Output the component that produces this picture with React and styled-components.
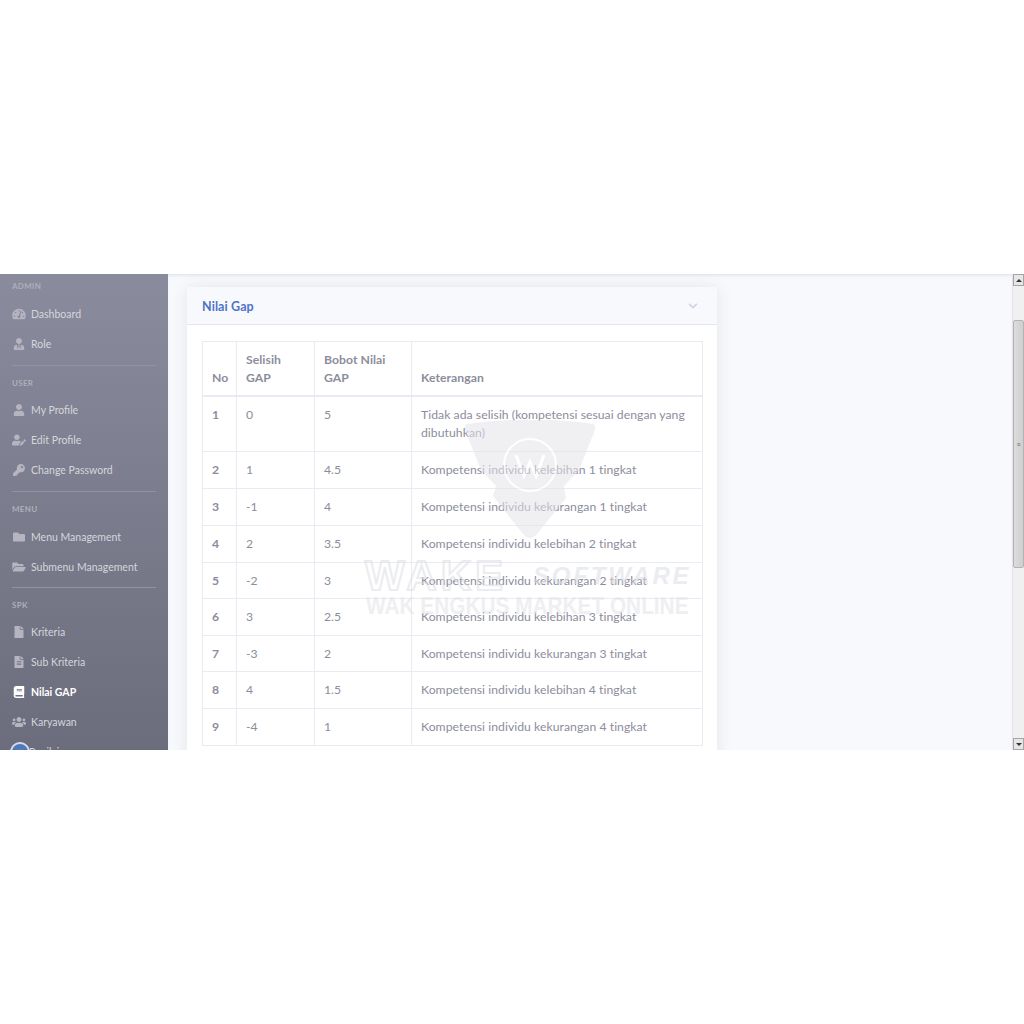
import React from 'react';
import styled, {createGlobalStyle} from 'styled-components';
import {
  FaTachometerAlt,
  FaUserTie,
  FaUser,
  FaUserEdit,
  FaKey,
  FaFolder,
  FaFolderOpen,
  FaFile,
  FaFileAlt,
  FaBook,
  FaUsers,
  FaChevronDown
} from 'react-icons/fa';

const GlobalStyle = createGlobalStyle`
  html, body {
    margin: 0;
    background: #fff;
    font-family: Lato, "Open Sans", sans-serif;
  }
`;

const Page = styled.div`
  width: 1024px;
  height: 1024px;
  padding-top: 274px;
  box-sizing: border-box;
  background: #fff;
  overflow: hidden;
`;

const Frame = styled.div`
  position: relative;
  display: flex;
  height: 476px;
  overflow: hidden;
  background: #f8f9fc;
`;

const Sidebar = styled.nav`
  width: 168px;
  flex-shrink: 0;
  padding: 0 12px;
  box-sizing: border-box;
  overflow: hidden;
  background: linear-gradient(180deg, #8a8b9c 0%, #6b6c7c 100%);
`;

const Heading = styled.div`
  height: ${p => (p.$tall ? 25 : 24)}px;
  line-height: 24px;
  font-size: 8px;
  font-weight: 700;
  letter-spacing: 0.3px;
  color: #aeafbb;
  text-transform: uppercase;
`;

const Item = styled.div`
  display: flex;
  align-items: center;
  height: 30px;
  font-size: 10.5px;
  font-weight: ${p => (p.$active ? 700 : 400)};
  color: ${p => (p.$active ? '#ffffff' : '#d6d6dd')};
  white-space: nowrap;

  svg {
    width: 14px;
    margin-right: 5px;
    flex-shrink: 0;
    font-size: 12px;
    color: ${p => (p.$active ? '#ffffff' : '#b4b5c0')};
  }
`;

const Label = styled.span`
  display: block;
`;

const Divider = styled.div`
  height: 1px;
  margin: ${p => (p.$tight ? 5 : 6)}px 0 5px;
  background: #9192a2;
`;

const Avatar = styled.span`
  width: 20px;
  height: 20px;
  margin: 0 -1px 0 -2px;
  border-radius: 50%;
  box-sizing: border-box;
  border: 2px solid #d5dbe8;
  background: #4f79b8;
  flex-shrink: 0;
`;

const Content = styled.main`
  flex: 1;
  min-width: 0;
  padding: 13px 0 0 19px;
  overflow: hidden;
  box-shadow: inset 0 3px 4px -3px rgba(90, 92, 105, 0.25);
`;

const Card = styled.section`
  width: 530px;
  background: #fff;
  border-radius: 3px;
  box-shadow: 0 0 16px rgba(58, 59, 69, 0.1);
`;

const CardHeader = styled.header`
  display: flex;
  align-items: center;
  justify-content: space-between;
  height: 38px;
  box-sizing: border-box;
  padding: 1px 19px 0 15px;
  background: #f8f9fc;
  border-bottom: 1px solid #e3e6f0;
  border-radius: 3px 3px 0 0;

  svg {
    font-size: 10px;
    color: #d1d3e2;
  }
`;

const CardTitle = styled.h6`
  margin: 0;
  font-size: 12.5px;
  font-weight: 700;
  letter-spacing: 0.1px;
  color: #4e73c9;
`;

const CardBody = styled.div`
  padding: 16px 15px 60px;
`;

const Table = styled.table`
  width: 500px;
  table-layout: fixed;
  border-collapse: collapse;
  font-size: 12.2px;
  line-height: 18px;
  letter-spacing: 0.05px;
  color: #8c8d9c;
`;

const Th = styled.th`
  width: ${p => p.$w}px;
  padding: 9px 9px 8px;
  box-sizing: border-box;
  text-align: left;
  vertical-align: bottom;
  font-weight: 700;
  border: 1px solid #e9ebf3;
  border-bottom-width: 2px;
`;

const Td = styled.td`
  height: ${p => p.$h || 36}px;
  padding: 9px 9px 7px;
  box-sizing: border-box;
  vertical-align: top;
  font-weight: ${p => (p.$bold ? 700 : 400)};
  border: 1px solid #e9ebf3;
`;

const Scrollbar = styled.div`
  display: flex;
  flex-direction: column;
  width: 12px;
  flex-shrink: 0;
  background: #f0f0f0;
  border-left: 1px solid #e4e4e4;
  box-sizing: border-box;
`;

const ScrollButton = styled.div`
  display: flex;
  align-items: center;
  justify-content: center;
  height: 12px;
  flex-shrink: 0;
  background: #e6e6e6;
  border: 1px solid #a5a5a5;
  box-sizing: border-box;
`;

const Arrow = styled.span`
  width: 0;
  height: 0;
  border-left: 3px solid transparent;
  border-right: 3px solid transparent;
  ${p =>
    p.$up
      ? 'border-bottom: 3px solid #333;'
      : 'border-top: 3px solid #333;'}
`;

const Thumb = styled.div`
  display: flex;
  align-items: center;
  justify-content: center;
  height: 248px;
  margin-top: 34px;
  background: linear-gradient(90deg, #dcdcdc, #cfcfcf);
  border: 1px solid #b4b4b4;
  border-radius: 2px;
  box-sizing: border-box;
  font-size: 7px;
  color: #666;
`;

const Spacer = styled.div`
  flex: 1;
`;

const Watermark = styled.div`
  position: absolute;
  left: 365px;
  top: 144px;
  width: 326px;
  height: 200px;
  pointer-events: none;
  opacity: 0.55;
`;

const Logo = styled.svg`
  position: absolute;
  left: 100px;
  top: 0;
`;

const WakeWord = styled.span`
  position: absolute;
  left: 0;
  top: 137px;
  font-family: "Liberation Sans", sans-serif;
  font-size: 42px;
  line-height: 42px;
  font-weight: 700;
  letter-spacing: 4px;
  color: transparent;
  -webkit-text-stroke: 2px #dcdde3;
`;

const SoftWord = styled.span`
  position: absolute;
  left: 168px;
  top: 146px;
  font-family: "Liberation Sans", sans-serif;
  font-size: 24px;
  line-height: 24px;
  font-weight: 700;
  font-style: italic;
  letter-spacing: 2.8px;
  color: #dcdde3;
`;

const Tagline = styled.span`
  position: absolute;
  left: 1px;
  top: 175px;
  font-family: "Liberation Sans", sans-serif;
  font-size: 24px;
  line-height: 26px;
  font-weight: 700;
  white-space: nowrap;
  color: #e2e3e8;
  transform: scaleX(0.867);
  transform-origin: left center;
`;

const nav = [
  {type: 'head', label: 'Admin', tall: true},
  {icon: FaTachometerAlt, label: 'Dashboard'},
  {icon: FaUserTie, label: 'Role'},
  {type: 'div'},
  {type: 'head', label: 'User'},
  {icon: FaUser, label: 'My Profile'},
  {icon: FaUserEdit, label: 'Edit Profile'},
  {icon: FaKey, label: 'Change Password'},
  {type: 'div'},
  {type: 'head', label: 'Menu', tall: true},
  {icon: FaFolder, label: 'Menu Management'},
  {icon: FaFolderOpen, label: 'Submenu Management'},
  {type: 'div', tight: true},
  {type: 'head', label: 'SPK'},
  {icon: FaFile, label: 'Kriteria'},
  {icon: FaFileAlt, label: 'Sub Kriteria'},
  {icon: FaBook, label: 'Nilai GAP', active: true},
  {icon: FaUsers, label: 'Karyawan'},
  {avatar: true, label: 'Penilaian'}
];

const rows = [
  {h: 55, cells: ['1', '0', '5', 'Tidak ada selisih (kompetensi sesuai dengan yang dibutuhkan)']},
  {h: 37, cells: ['2', '1', '4.5', 'Kompetensi individu kelebihan 1 tingkat']},
  {h: 37, cells: ['3', '-1', '4', 'Kompetensi individu kekurangan 1 tingkat']},
  {h: 37, cells: ['4', '2', '3.5', 'Kompetensi individu kelebihan 2 tingkat']},
  {h: 36, cells: ['5', '-2', '3', 'Kompetensi individu kekurangan 2 tingkat']},
  {h: 37, cells: ['6', '3', '2.5', 'Kompetensi individu kelebihan 3 tingkat']},
  {h: 36, cells: ['7', '-3', '2', 'Kompetensi individu kekurangan 3 tingkat']},
  {h: 37, cells: ['8', '4', '1.5', 'Kompetensi individu kelebihan 4 tingkat']},
  {h: 37, cells: ['9', '-4', '1', 'Kompetensi individu kekurangan 4 tingkat']}
];

const App = () => {
  return (
    <Page>
      <GlobalStyle />
      <Frame>
        <Sidebar>
          {nav.map((n, i) => {
            if (n.type === 'head') return <Heading key={i} $tall={n.tall}>{n.label}</Heading>;
            if (n.type === 'div') return <Divider key={i} $tight={n.tight} />;
            const Icon = n.icon;
            return (
              <Item key={i} $active={n.active}>
                {n.avatar ? <Avatar /> : <Icon />}
                <Label>{n.label}</Label>
              </Item>
            );
          })}
        </Sidebar>
        <Content>
          <Card>
            <CardHeader>
              <CardTitle>Nilai Gap</CardTitle>
              <FaChevronDown />
            </CardHeader>
            <CardBody>
              <Table>
                <thead>
                  <tr>
                    <Th $w={34}>No</Th>
                    <Th $w={78}>Selisih GAP</Th>
                    <Th $w={97}>Bobot Nilai GAP</Th>
                    <Th $w={291}>Keterangan</Th>
                  </tr>
                </thead>
                <tbody>
                  {rows.map(r => (
                    <tr key={r.cells[0]}>
                      <Td $bold $h={r.h}>{r.cells[0]}</Td>
                      <Td $h={r.h}>{r.cells[1]}</Td>
                      <Td $h={r.h}>{r.cells[2]}</Td>
                      <Td $h={r.h}>{r.cells[3]}</Td>
                    </tr>
                  ))}
                </tbody>
              </Table>
            </CardBody>
          </Card>
        </Content>
        <Scrollbar>
          <ScrollButton>
            <Arrow $up />
          </ScrollButton>
          <Thumb>≡</Thumb>
          <Spacer />
          <ScrollButton>
            <Arrow />
          </ScrollButton>
        </Scrollbar>
        <Watermark>
          <Logo width="130" height="124" viewBox="0 0 130 124">
            <path
              d="M2 6 Q30 2 52 2 L78 2 Q104 2 128 6 Q131 7 130 12 L114 52 L99 68 L101 80 L72 116 Q65 124 58 116 L28 78 L31 68 L16 52 L0 12 Q-1 7 2 6 Z"
              fill="#e4e5ea"
            />
            <circle cx="65" cy="47" r="26" fill="none" stroke="#fff" strokeWidth="2" />
            <path d="M51 37 L59 58 L65 44 L71 58 L79 37" fill="none" stroke="#fff" strokeWidth="3" />
          </Logo>
          <WakeWord>WAKE</WakeWord>
          <SoftWord>SOFTWARE</SoftWord>
          <Tagline>WAK ENGKUS MARKET ONLINE</Tagline>
        </Watermark>
      </Frame>
    </Page>
  );
};

export default App;
